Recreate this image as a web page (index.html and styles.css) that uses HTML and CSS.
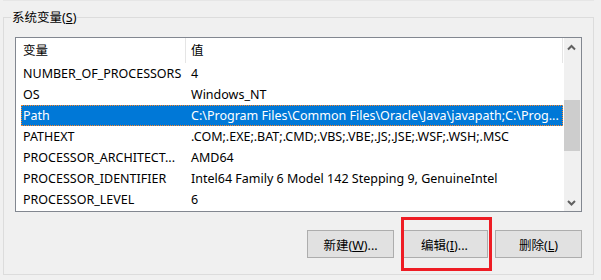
FILE: index.html
```html
<!DOCTYPE html>
<html lang="zh-CN">
<head>
    <meta charset="UTF-8">
    <title>系统变量</title>
    <link rel="stylesheet" href="styles.css">
</head>
<body>
    <div class="top-rule"></div>

    <div class="group">
        <div class="group-title">系统变量(<u>S</u>)</div>

        <div class="listview">
            <div class="list-body">
                <div class="list-header">
                    <div class="col-name">变量</div>
                    <div class="col-value">值</div>
                </div>
                <div class="row"><div class="col-name">NUMBER_OF_PROCESSORS</div><div class="col-value">4</div></div>
                <div class="row"><div class="col-name">OS</div><div class="col-value">Windows_NT</div></div>
                <div class="row selected"><div class="col-name">Path</div><div class="col-value">C:\Program Files\Common Files\Oracle\Java\javapath;C:\Prog...</div></div>
                <div class="row"><div class="col-name">PATHEXT</div><div class="col-value">.COM;.EXE;.BAT;.CMD;.VBS;.VBE;.JS;.JSE;.WSF;.WSH;.MSC</div></div>
                <div class="row"><div class="col-name">PROCESSOR_ARCHITECT...</div><div class="col-value">AMD64</div></div>
                <div class="row"><div class="col-name">PROCESSOR_IDENTIFIER</div><div class="col-value">Intel64 Family 6 Model 142 Stepping 9, GenuineIntel</div></div>
                <div class="row"><div class="col-name">PROCESSOR_LEVEL</div><div class="col-value">6</div></div>
            </div>

            <div class="scrollbar">
                <div class="arrow">
                    <svg width="17" height="17" viewBox="0 0 17 17"><polyline points="4,11.5 7.5,8 11,11.5" fill="none" stroke="#606060" stroke-width="2"/></svg>
                </div>
                <div class="track"><div class="thumb"></div></div>
                <div class="arrow">
                    <svg width="17" height="17" viewBox="0 0 17 17"><polyline points="4,7 7.5,10.5 11,7" fill="none" stroke="#606060" stroke-width="2"/></svg>
                </div>
            </div>
        </div>

        <div class="buttons">
            <button>新建(<u>W</u>)...</button>
            <div class="marked">
                <button>编辑(<u>I</u>)...</button>
                <div class="callout"></div>
            </div>
            <button>删除(<u>L</u>)</button>
        </div>
    </div>
</body>
</html>
```

FILE: styles.css
```css
body {
    margin: 0;
    padding: 0;
    background-color: #f0f0f0;
    font-family: "Noto Sans", "Noto Sans CJK SC", sans-serif;
    font-size: 12.5px;
    color: #000;
    overflow: hidden;
}

.top-rule {
    height: 1px;
    margin-left: 3px;
    width: 591px;
    background-color: #e6e6e6;
}

.group {
    box-sizing: border-box;
    margin: 16px 0 0 3px;
    width: 591px;
    height: 258px;
    border: 1px solid #dcdcdc;
}

.group-title {
    width: fit-content;
    margin: -8px 0 0 7px;
    padding: 0 1px;
    line-height: 16px;
    background-color: #f0f0f0;
}

.listview {
    box-sizing: border-box;
    display: flex;
    margin: 11px 0 0 11px;
    width: 567px;
    height: 175px;
    border: 1px solid #828790;
    background-color: #fff;
}

.list-body {
    flex: 1;
    overflow: hidden;
}

.list-header,
.row {
    display: flex;
    white-space: nowrap;
}

.list-header {
    height: 25px;
    line-height: 25px;
}

.list-header .col-name {
    width: 162px;
    padding-left: 7px;
    border-right: 1px solid #e5e5e5;
}

.list-header .col-value {
    width: 371px;
    padding-left: 5px;
    border-right: 1px solid #e5e5e5;
}

.row {
    height: 21px;
    line-height: 21px;
    margin-left: 5px;
    width: 542px;
}

.row .col-name {
    width: 163px;
    padding-left: 2px;
    overflow: hidden;
}

.row .col-value {
    flex: 1;
    padding-left: 5px;
    overflow: hidden;
}

.row.selected {
    background-color: #0078d7;
    color: #fff;
    outline: 1px dotted #ff8728;
    outline-offset: -1px;
}

.scrollbar {
    width: 17px;
    display: flex;
    flex-direction: column;
    background-color: #f0f0f0;
}

.arrow {
    height: 17px;
}

.arrow svg {
    display: block;
}

.track {
    flex: 1;
}

.thumb {
    margin: 45px 1px 0 0;
    height: 51px;
    background-color: #cdcdcd;
}

.buttons {
    display: flex;
    justify-content: flex-end;
    gap: 7px;
    margin-top: 18px;
    padding-right: 11px;
}

.marked {
    position: relative;
}

button {
    box-sizing: border-box;
    width: 87px;
    height: 28px;
    padding: 0;
    border: 1px solid #adadad;
    background-color: #e1e1e1;
    font-family: "Noto Sans", "Noto Sans CJK SC", sans-serif;
    font-size: 12.5px;
    color: #000;
    display: block;
}

.callout {
    position: absolute;
    left: 0;
    top: -13px;
    box-sizing: border-box;
    width: 91px;
    height: 54px;
    border: 3px solid #ee1c24;
}
```
